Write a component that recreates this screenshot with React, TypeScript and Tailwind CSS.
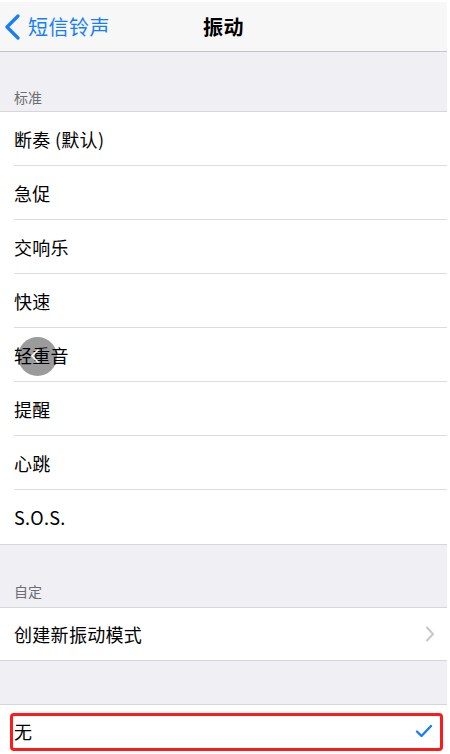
import React from "react";

const font = { fontFamily: '"Noto Sans CJK SC", "Noto Sans", sans-serif' };

const rows = ["断奏 (默认)", "急促", "交响乐", "快速", "轻重音", "提醒", "心跳", "S.O.S."];

export default function App() {
  return (
    <div className="w-[450px] h-[754px] bg-white overflow-hidden flex" style={font}>
      <div className="w-[447px] h-full bg-[#efeff4] flex flex-col">
        <div className="h-[2px] bg-white shrink-0" />
        <div className="h-[50px] shrink-0 bg-[#f7f7f8] border-b border-[#c4c4c8] relative flex items-center justify-center">
          <div className="absolute left-[4px] top-0 h-full flex items-center gap-[6px] text-[#157efb]">
            <svg width="18" height="26" viewBox="0 0 18 26" className="mt-[1px]">
              <path d="M14 2 L3 13 L14 24" fill="none" stroke="#157efb" strokeWidth="3.2" strokeLinecap="round" strokeLinejoin="round" />
            </svg>
            <span className="text-[20px] leading-none tracking-[0.5px]">短信铃声</span>
          </div>
          <span className="text-[20px] leading-none font-semibold text-black tracking-[0.5px]">振动</span>
        </div>
        <div className="h-[59px] shrink-0 flex items-end pl-[14px] pb-[7px]">
          <span className="text-[14px] leading-none text-[#6d6d72]">标准</span>
        </div>
        <div className="bg-white border-t border-b border-[#d6d6da] shrink-0">
          {rows.map((r, i) => (
            <div key={r} className="relative h-[54px] flex">
              {i === 4 && (
                <div className="absolute left-[18px] top-[9px] w-[39px] h-[39px] rounded-full bg-[#9b9b9b]" />
              )}
              <div
                className={
                  "relative flex-1 ml-[14px] flex items-center text-[18px] text-black " +
                  (i < rows.length - 1 ? "border-b border-[#dcdce0]" : "")
                }
              >
                <span className="leading-none tracking-[0.3px]">{r}</span>
              </div>
              {i === 4 && (
                <svg width="12" height="16" viewBox="0 0 12 16" className="absolute left-[29px] top-[20px]">
                  <path d="M9 2 L3 8 L9 14" fill="none" stroke="white" strokeWidth="1.6" strokeLinecap="round" />
                </svg>
              )}
            </div>
          ))}
        </div>
        <div className="h-[62px] shrink-0 flex items-end pl-[14px] pb-[9px]">
          <span className="text-[14px] leading-none text-[#6d6d72]">自定</span>
        </div>
        <div className="h-[54px] shrink-0 bg-white border-t border-b border-[#d6d6da] flex items-center pl-[14px] pr-[12px]">
          <span className="flex-1 text-[18px] leading-none text-black tracking-[0.3px]">创建新振动模式</span>
          <svg width="10" height="16" viewBox="0 0 10 16">
            <path d="M2 1.5 L8 8 L2 14.5" fill="none" stroke="#c7c7cc" strokeWidth="2" strokeLinecap="round" strokeLinejoin="round" />
          </svg>
        </div>
        <div className="h-[43px] shrink-0" />
        <div className="flex-1 bg-white border-t border-[#d6d6da] relative">
          <div className="absolute left-[10px] top-[8px] w-[433px] h-[38px] border-[3px] border-[#ff1a1a] rounded-[4px]" />
          <div className="h-[54px] flex items-center pl-[14px] pr-[12px]">
            <span className="flex-1 text-[18px] leading-none text-black mt-[-2px]">无</span>
            <svg width="18" height="14" viewBox="0 0 18 14" className="mt-[-2px] mr-[2px]">
              <path d="M2 7.5 L6.5 12 L16 2" fill="none" stroke="#157efb" strokeWidth="2.4" strokeLinecap="round" strokeLinejoin="round" />
            </svg>
          </div>
        </div>
      </div>
    </div>
  );
}
